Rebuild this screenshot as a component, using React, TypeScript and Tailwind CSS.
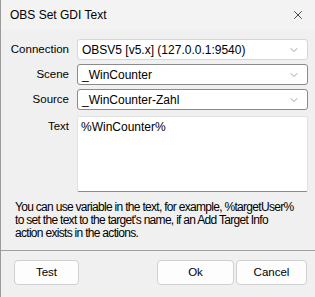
import { ChevronDown, X } from "lucide-react";

const font = { fontFamily: '"Liberation Sans", Arial, sans-serif' };

function Combo({ value, light }: { value: string; light?: boolean }) {
  return (
    <div
      className={`flex h-[21px] items-center justify-between rounded-[3px] border bg-white pl-[4px] pr-[7px] ${
        light ? "border-[#d6d6d6]" : "border-[#8a8a8a]"
      }`}
    >
      <span className="text-[12px] text-black">{value}</span>
      <ChevronDown size={12} strokeWidth={1.2} className="text-[#606060]" />
    </div>
  );
}

export default function App() {
  return (
    <div
      className="flex h-[297px] w-[315px] flex-col overflow-hidden border-l border-[#9a9a9a] bg-[#f0f0f0] text-[11.5px] text-black"
      style={font}
    >
      {/* Title bar */}
      <div className="flex h-[30px] shrink-0 items-center justify-between bg-[#f3f3f3] pl-[9px] pr-[10px]">
        <span className="text-[12px]">OBS Set GDI Text</span>
        <X size={14} strokeWidth={1.2} className="text-black" />
      </div>

      {/* Form */}
      <div className="flex flex-col pt-[9px] pr-[7px]">
        <div className="flex items-center gap-[8px]">
          <span className="w-[68px] shrink-0 whitespace-nowrap text-right">Connection</span>
          <div className="flex-1">
            <Combo value="OBSV5 [v5.x] (127.0.0.1:9540)" light />
          </div>
        </div>
        <div className="mt-[4px] flex items-center gap-[8px]">
          <span className="w-[68px] shrink-0 text-right">Scene</span>
          <div className="flex-1">
            <Combo value="_WinCounter" />
          </div>
        </div>
        <div className="mt-[4px] flex items-center gap-[8px]">
          <span className="w-[68px] shrink-0 text-right">Source</span>
          <div className="flex-1">
            <Combo value="_WinCounter-Zahl" />
          </div>
        </div>
        <div className="mt-[6px] flex items-start gap-[8px]">
          <span className="w-[68px] shrink-0 pt-[2px] text-right">Text</span>
          <div className="h-[76px] flex-1 rounded-[2px] border border-[#e2e2e2] border-b-[#8a8a8a] bg-white px-[3px] pt-[1px] text-[12px]">
            %WinCounter%
          </div>
        </div>
      </div>

      {/* Help text */}
      <p className="mt-[9px] whitespace-nowrap pl-[14px] text-[12px] leading-[13px] tracking-[-0.7px]">
        You can use variable in the text, for example, %targetUser%
        <br />
        to set the text to the target's name, if an Add Target Info
        <br />
        action exists in the actions.
      </p>

      <div className="mt-[10px] h-px shrink-0 bg-[#a0a0a0]" />

      {/* Buttons */}
      <div className="flex pt-[9px] pl-[13px] pr-[8px]">
        <button className="h-[25px] w-[65px] rounded-[4px] border border-[#d0d0d0] bg-[#fdfdfd]">Test</button>
        <div className="ml-auto flex gap-[2px]">
          <button className="h-[25px] w-[77px] rounded-[4px] border border-[#d0d0d0] bg-[#fdfdfd]">Ok</button>
          <button className="h-[25px] w-[71px] rounded-[4px] border border-[#d0d0d0] bg-[#fdfdfd]">Cancel</button>
        </div>
      </div>
    </div>
  );
}
